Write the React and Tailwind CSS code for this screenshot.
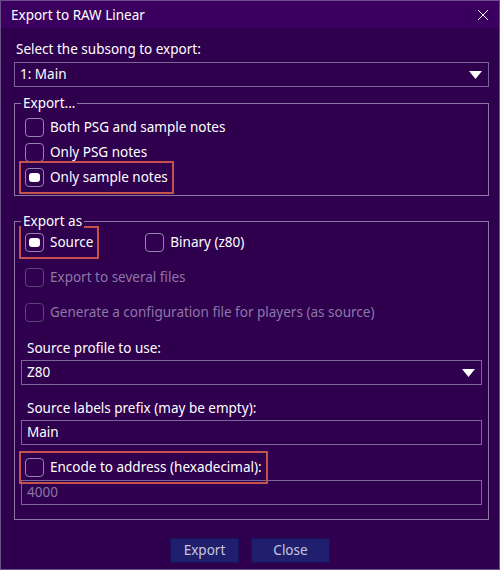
import React from "react";

function Check({ checked, disabled }) {
  return (
    <span
      className={
        "w-[19px] h-[19px] rounded-[4px] border flex items-center justify-center shrink-0 " +
        (disabled ? "border-[#5c4579]" : "border-[#9584ad]")
      }
    >
      {checked && <span className="w-[11px] h-[9px] rounded-[3px] bg-white" />}
    </span>
  );
}

function Row({ label, checked, disabled, highlight, className = "" }) {
  return (
    <div className={"h-[25px] flex items-center " + className}>
      <span
        className={
          "inline-flex items-center gap-[6px] " +
          (highlight ? "outline-2 outline-[#c4514c] outline-offset-[4px]" : "")
        }
      >
        <Check checked={checked} disabled={disabled} />
        <span className={disabled ? "text-[#8d76a8]" : "text-white"}>{label}</span>
      </span>
    </div>
  );
}

function Triangle() {
  return (
    <svg width="13" height="8" viewBox="0 0 13 8">
      <path d="M0 0 L13 0 L6.5 8 Z" fill="white" />
    </svg>
  );
}

function Group({ title, className = "", children }) {
  return (
    <div className={"relative border border-[#8a78a3] " + className}>
      <span className="absolute -top-[11px] left-[6px] px-[2px] bg-[#2e004e] leading-[20px] text-white">
        {title}
      </span>
      {children}
    </div>
  );
}

export default function App() {
  return (
    <div
      className="w-[500px] h-[570px] bg-[#2e004e] border border-[#6b5088] flex flex-col text-[13.5px] text-white"
      style={{ fontFamily: '"Noto Sans", "DejaVu Sans", sans-serif' }}
    >
      <div className="h-[27px] bg-[#3b005f] flex items-center justify-between pl-[10px] pr-[10px]">
        <span className="leading-[20px]">Export to RAW Linear</span>
        <svg width="12" height="12" viewBox="0 0 12 12">
          <path d="M1 1 L11 11 M11 1 L1 11" stroke="white" strokeWidth="1" />
        </svg>
      </div>
      <div className="pl-[13px] pr-[10px] flex flex-col">
        <div className="mt-[11px] h-[20px] leading-[20px] pl-[2px]">Select the subsong to export:</div>
        <div className="mt-[3px] h-[25px] border border-[#7c6598] flex items-center justify-between pl-[5px] pr-[6px]">
          <span>1: Main</span>
          <Triangle />
        </div>
        <Group title="Export..." className="mt-[16px] pt-[11px] pb-[5px] pl-[10px]">
          <Row label="Both PSG and sample notes" />
          <Row label="Only PSG notes" />
          <Row label="Only sample notes" checked highlight />
        </Group>
        <Group title="Export as" className="mt-[25px] pt-[8px] pb-[14px] px-[6px]">
          <div className="h-[25px] flex items-center pl-[4px]">
            <span className="inline-flex items-center gap-[6px] outline-2 outline-[#c4514c] outline-offset-[4px]">
              <Check checked />
              <span>Source</span>
            </span>
            <span className="inline-flex items-center gap-[6px] ml-[52px]">
              <Check />
              <span>Binary (z80)</span>
            </span>
          </div>
          <Row label="Export to several files" disabled className="mt-[10px] pl-[4px]" />
          <Row
            label="Generate a configuration file for players (as source)"
            disabled
            className="mt-[10px] pl-[4px]"
          />
          <div className="mt-[13px] h-[20px] leading-[20px] pl-[6px]">Source profile to use:</div>
          <div className="mt-[2px] h-[25px] border border-[#7c6598] flex items-center justify-between pl-[5px] pr-[6px]">
            <span>Z80</span>
            <Triangle />
          </div>
          <div className="mt-[13px] h-[20px] leading-[20px] pl-[6px]">Source labels prefix (may be empty):</div>
          <div className="mt-[2px] h-[25px] border border-[#7c6598] flex items-center pl-[5px]">
            <span>Main</span>
          </div>
          <Row label="Encode to address (hexadecimal):" highlight className="mt-[10px] pl-[4px]" />
          <div className="h-[25px] border border-[#7c6598] flex items-center pl-[5px]">
            <span className="text-[#8d76a8]">4000</span>
          </div>
        </Group>
        <div className="mt-[18px] flex justify-center gap-[12px] pr-[3px]">
          <button className="w-[69px] h-[25px] bg-[#1f1f6e] border border-[#19145a] text-[#c9c6dc]">
            Export
          </button>
          <button className="w-[79px] h-[25px] bg-[#1f1f6e] border border-[#19145a] text-[#c9c6dc]">
            Close
          </button>
        </div>
      </div>
    </div>
  );
}
